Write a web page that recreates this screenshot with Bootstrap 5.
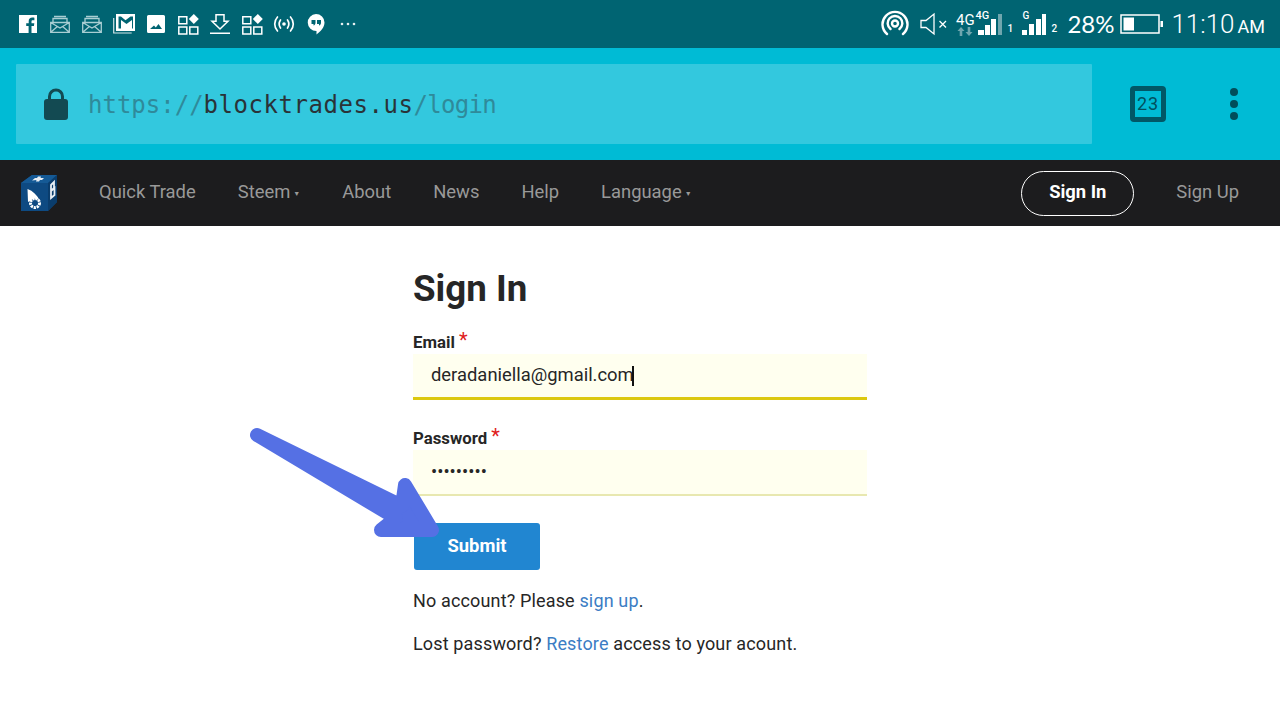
<!DOCTYPE html>
<html lang="en">
<head>
    <meta charset="UTF-8">
    <meta name="viewport" content="width=device-width, initial-scale=1.0">
    <title>Sign In - Blocktrades</title>
    <link href="https://cdn.jsdelivr.net/npm/bootstrap@5.3.3/dist/css/bootstrap.min.css" rel="stylesheet">
    <script src="https://cdn.jsdelivr.net/npm/bootstrap@5.3.3/dist/js/bootstrap.bundle.min.js"></script>
    <style>
        html, body { height: 720px; overflow: hidden; }
        body { font-family: Roboto, sans-serif; background: #fff; color: #262626; position: relative; }

        /* android status bar */
        .status-bar { height: 48px; background: #006472; color: #fff; padding: 0 15px 0 12px; }
        .slot { width: 32px; height: 48px; }
        .slot svg { display: block; }
        .stat-r { height: 48px; }
        .spk { margin-left: 11px; }
        .net-a { width: 20px; margin-left: 5px; }
        .net-a span { font-size: 15px; line-height: 13px; margin-top: 1px; }
        .net-b { width: 30px; height: 24px; }
        .net-c { width: 28px; height: 24px; margin-left: 9px; }
        .net-b span, .net-c span { position: absolute; left: 0; top: -2px; font-size: 11px; line-height: 11px; font-weight: 500; }
        .net-c span { font-size: 10px; }
        .net-b svg, .net-c svg { position: absolute; left: 0; top: 0; }
        .sig-num { width: 6px; font-size: 10px; font-weight: 500; line-height: 10px; align-self: flex-end; margin: 0 0 14px 2px; }
        .sig-two { margin-left: 1px; }
        .batt-pct { font-family: Lato, sans-serif; font-size: 24px; margin-left: 10px; width: 47px; white-space: nowrap; }
        .batt { margin-left: 6px; }
        .clock { font-size: 26px; font-weight: 300; margin-left: 7px; }
        .clock small { font-size: 18px; font-weight: 400; margin-left: 3px; }

        /* browser chrome */
        .url-bar { height: 112px; background: #00bbd5; padding: 16px; }
        .url-box { width: 1076px; height: 80px; background: #33c8de; padding-left: 28px; border-radius: 1px; }
        .url-text { font-family: "DejaVu Sans Mono", monospace; font-size: 24px; margin: 2px 0 0 20px; color: #2f8a9a; }
        .url-text b { font-weight: 400; color: #2a3338; letter-spacing: .55px; }
        .url-text span { letter-spacing: -.7px; }
        .tab-count { width: 36px; height: 36px; border: 5px solid #015766; border-radius: 4px; margin-left: 38px; font-size: 18px; line-height: 1; color: #01505e; letter-spacing: .8px; }
        .menu-dots { margin-left: 64px; gap: 4px; }
        .menu-dots i { display: block; width: 8px; height: 8px; border-radius: 50%; background: #014d5a; }

        /* site nav */
        .site-nav { height: 66px; background: #1c1c1e; padding: 0 20px 0 21px; }
        .site-nav .nav-link, .site-nav .navbar-nav .nav-link { color: #999; font-size: 18.4px; padding: 0 21px 3px; }
        .site-nav .navbar-nav .nav-link.first { margin-left: 21px; }
        .logo-cube { display: block; line-height: 0; }
        .caret-mini { font-size: 7px; margin-left: 3px; vertical-align: 2px; }
        .btn-pill { width: 113px; height: 45px; border: 1.5px solid #fff; border-radius: 23px; color: #fff; font-size: 18.4px; font-weight: 700; padding: 0 0 2px; margin-right: 21px; }
        .btn-pill:hover { color: #fff; }

        /* form */
        .login-wrap { width: 454px; margin: 0 auto; padding-top: 41px; font-size: 18px; letter-spacing: .15px; }
        .login-wrap h1 { font-size: 36.7px; font-weight: 700; line-height: 44px; margin-bottom: 19px; letter-spacing: 0; }
        .fld-label { font-size: 16.8px; font-weight: 700; line-height: 23px; padding-top: 1px; margin: 0; display: block; letter-spacing: 0; }
        .req { color: #e02020; font-weight: 400; font-size: 20px; line-height: 10px; vertical-align: 1px; }
        .fld { height: 46px; border: 0; border-bottom: 2px solid #e8e8b0; border-radius: 0; background: #ffffef; padding: 0 18px 2px; font-size: 18.4px; color: #262626; }
        .fld.active { border-bottom: 3px solid #dcc80f; }
        .fld:focus { background: #ffffef; box-shadow: none; }
        .fld-wrap { margin-bottom: 26px; position: relative; }
        .txt-caret { position: absolute; left: 219px; top: 12px; width: 2px; height: 20px; background: #111; }
        .btn-go { width: 126px; height: 47px; background: #2186d1; color: #fff; font-size: 18.4px; font-weight: 700; border: 0; border-radius: 3px; margin: 1px 0 0 1px; padding: 0 0 2px; }
        .note { margin: 0; line-height: 27px; }
        .note.gap-one { margin: 17px 0 16px; }
        .note a { color: #3b7dc4; text-decoration: none; }
        .arrow-over { position: absolute; left: 0; top: 0; pointer-events: none; }
    </style>
</head>
<body>
    <!-- status bar -->
    <div class="status-bar d-flex align-items-center justify-content-between">
        <div class="d-flex">
            <div class="slot d-flex align-items-center justify-content-center">
                <svg width="18" height="18" viewBox="0 0 18 18"><path fill="#fff" d="M0 0h18v18h-5.500v-7h2.400l.4-2.800h-2.800V6.500c0-.8.3-1.300 1.400-1.300h1.500V2.700c-.3 0-1.100-.1-2.100-.1-2.200 0-3.600 1.300-3.600 3.700v1.900H7.200V11h2.400v7H0z"/></svg>
            </div>
            <div class="slot d-flex align-items-center justify-content-center">
                <svg width="20" height="18" viewBox="0 0 20 18" fill="none" stroke="#a9ced3" stroke-width="1.300"><path d="M.7 7.500h18.600v9.800H.7zM.7 7.500l9.300 5.500 9.300-5.500M.7 17.300l7-6M19.300 17.300l-7-6M3 7V3.500h14V7M4 1.500h12"/></svg>
            </div>
            <div class="slot d-flex align-items-center justify-content-center">
                <svg width="20" height="18" viewBox="0 0 20 18" fill="none" stroke="#a9ced3" stroke-width="1.300"><path d="M.7 7.500h18.600v9.800H.7zM.7 7.500l9.300 5.500 9.300-5.500M.7 17.300l7-6M19.300 17.300l-7-6M3 7V3.500h14V7M4 1.500h12"/></svg>
            </div>
            <div class="slot d-flex align-items-center justify-content-center">
                <svg width="22" height="20" viewBox="0 0 22 20"><path fill="none" stroke="#cfe3e6" stroke-width="1.200" d="M.7 4v15h18"/><path fill="#fff" fill-rule="evenodd" d="M3 0h19v17H3zM5.500 2.500v12h2.500V6l5.500 4 5.500-4v8.500H20V2.500h-2.500l-5 3.800-4.500-3.800z"/></svg>
            </div>
            <div class="slot d-flex align-items-center justify-content-center">
                <svg width="18" height="18" viewBox="0 0 18 18"><path fill="#fff" fill-rule="evenodd" d="M1.500 0h15A1.500 1.500 0 0 1 18 1.500v15a1.500 1.500 0 0 1-1.500 1.500h-15A1.500 1.500 0 0 1 0 16.500v-15A1.500 1.500 0 0 1 1.500 0zM3 14h12l-3.500-5-2.700 3.400-1.800-2z"/></svg>
            </div>
            <div class="slot d-flex align-items-center justify-content-center">
                <svg width="21" height="21" viewBox="0 0 21 21" fill="none" stroke="#fff" stroke-width="1.500"><path d="M.8 2.800h8v7h-8zM.8 13h8v7h-8zM11.800 13h8v7h-8z"/><path fill="#fff" stroke="none" d="M15.800 0l5 5-5 5-5-5z"/></svg>
            </div>
            <div class="slot d-flex align-items-center justify-content-center">
                <svg width="20" height="20" viewBox="0 0 20 20" fill="none" stroke="#fff" stroke-width="1.500"><path d="M6 .8h8v6.400h4l-8 7.800-8-7.800h4zM0 19.200h20"/></svg>
            </div>
            <div class="slot d-flex align-items-center justify-content-center">
                <svg width="21" height="21" viewBox="0 0 21 21" fill="none" stroke="#fff" stroke-width="1.500"><path d="M.8 2.800h8v7h-8zM.8 13h8v7h-8zM11.800 13h8v7h-8z"/><path fill="#fff" stroke="none" d="M15.800 0l5 5-5 5-5-5z"/></svg>
            </div>
            <div class="slot d-flex align-items-center justify-content-center">
                <svg width="22" height="18" viewBox="0 0 22 18" fill="none" stroke="#fff" stroke-width="1.700" stroke-linecap="round"><path d="M4.500 2C.8 6 .8 12 4.500 16M7.500 5C5.800 7.500 5.800 10.500 7.500 13M17.500 2c3.700 4 3.700 10 0 14M14.500 5c1.700 2.500 1.700 5.500 0 8"/><circle cx="11" cy="9" r="1.800" fill="#fff" stroke="none"/></svg>
            </div>
            <div class="slot d-flex align-items-center justify-content-center">
                <svg width="18" height="21" viewBox="0 0 18 21"><path fill="#fff" fill-rule="evenodd" d="M9 0a8.500 8.500 0 0 1 8.500 8.500c0 5-4 9-8 12v-3.500A8.500 8.500 0 0 1 9 0zM4.500 6v4h2v1.500c1.200-.3 2-1.400 2-2.800V6zM10 6v4h2v1.500c1.200-.3 2-1.400 2-2.800V6z"/></svg>
            </div>
            <div class="slot d-flex align-items-center justify-content-center">
                <svg width="16" height="4" viewBox="0 0 16 4" fill="#e6f0f1"><circle cx="2" cy="2" r="1.300"/><circle cx="8" cy="2" r="1.300"/><circle cx="14" cy="2" r="1.300"/></svg>
            </div>
        </div>
        <div class="stat-r d-flex align-items-center">
            <svg width="28" height="28" viewBox="0 0 28 28" fill="none" stroke="#fff" stroke-width="2.400" stroke-linecap="round"><path d="M6 24a12.500 12.500 0 1 1 16 0M9.500 19a7.300 7.300 0 1 1 9 0"/><circle cx="14" cy="13.500" r="3"/></svg>
            <svg class="spk" width="30" height="24" viewBox="0 0 30 24" fill="none" stroke="#fff" stroke-width="1.300"><path d="M1 8.500h5L14 2v20l-8-6.500H1zM19.500 9l6.500 6.500M26 9l-6.500 6.500"/></svg>
            <div class="net-a d-flex flex-column align-items-center">
                <span>4G</span>
                <svg width="16" height="9" viewBox="0 0 16 9" fill="#6fa6ae"><path d="M4 0l3.500 4H5.300v5H2.700V4H.5zM12 9L8.500 5h2.200V0h2.600v5h2.200z"/></svg>
            </div>
            <div class="net-b position-relative">
                <svg width="30" height="24" viewBox="0 0 30 24"><path fill="#fff" d="M3 18h6v5H3zM10 13h5v10h-5zM16 7h5v16h-5z"/><path fill="#6fa6ae" d="M23 2h4v21h-4z"/></svg>
                <span>4G</span>
            </div>
            <span class="sig-num">1</span>
            <div class="net-c position-relative">
                <svg width="28" height="24" viewBox="0 0 28 24" fill="#fff"><path d="M0 18h5v5H0zM7 12h5v11H7zM14 7h5v16h-5zM20 2h4v21h-4z"/></svg>
                <span>G</span>
            </div>
            <span class="sig-num sig-two">2</span>
            <span class="batt-pct">28%</span>
            <svg class="batt" width="44" height="20" viewBox="0 0 44 20"><path fill="none" stroke="#fff" stroke-width="1.500" d="M1 1h38v18H1z"/><path fill="#fff" d="M3.500 3.500H14v13H3.500zM40.500 7H43v6h-2.500z"/></svg>
            <span class="clock">11:10<small>AM</small></span>
        </div>
    </div>

    <!-- browser url bar -->
    <div class="url-bar d-flex align-items-center">
        <div class="url-box d-flex align-items-center">
            <svg width="24" height="32" viewBox="0 0 24 32"><path fill="none" stroke="#134a52" stroke-width="3" d="M5.500 13V8.500a6.500 6.500 0 0 1 13 0V13"/><rect y="11" width="24" height="21" rx="3" fill="#134a52"/></svg>
            <div class="url-text">https://<b>blocktrades.us</b><span>/login</span></div>
        </div>
        <div class="tab-count d-flex align-items-center justify-content-center">23</div>
        <div class="menu-dots d-flex flex-column"><i></i><i></i><i></i></div>
    </div>

    <!-- site nav -->
    <nav class="site-nav navbar navbar-expand justify-content-between">
        <div class="d-flex align-items-center">
            <a href="#" class="logo-cube">
                <svg width="36" height="36" viewBox="0 0 36 36">
                    <path fill="#0e4a82" d="M0 8L11 0h25v27l-9 9H0z"/>
                    <path fill="#155a96" d="M0 8L11 0h25l-9 8z"/>
                    <path fill="#0a3d6d" d="M27 8l9-8v27l-9 9z"/>
                    <!-- top face mark -->
                    <path fill="#e8eef4" d="M11 5.500l3-2.500h2l1-1.500h3l-.5 1.500h3.500L21 5h-2l-1 1.500h-3l.5-1.500z"/>
                    <!-- side face mark -->
                    <path fill="none" stroke="#e8eef4" stroke-width="1.800" d="M30 10l3-3v6l-3 3zM30 16l3.500-3v7l-3.500 3z"/>
                    <!-- sail and wheel -->
                    <path fill="#fff" d="M6.500 14c5.500 2 9.500 6 12 11l-5.500-1.500L7 27z"/>
                    <circle cx="14" cy="28" r="4.500" fill="none" stroke="#fff" stroke-width="3" stroke-dasharray="2.200 .8"/>
                </svg>
            </a>
            <ul class="navbar-nav">
                <li class="nav-item"><a class="nav-link first" href="#">Quick Trade</a></li>
                <li class="nav-item"><a class="nav-link" href="#">Steem<span class="caret-mini">▼</span></a></li>
                <li class="nav-item"><a class="nav-link" href="#">About</a></li>
                <li class="nav-item"><a class="nav-link" href="#">News</a></li>
                <li class="nav-item"><a class="nav-link" href="#">Help</a></li>
                <li class="nav-item"><a class="nav-link" href="#">Language<span class="caret-mini">▼</span></a></li>
            </ul>
        </div>
        <div class="d-flex align-items-center">
            <a href="#" class="btn btn-pill d-flex align-items-center justify-content-center">Sign In</a>
            <a class="nav-link" href="#">Sign Up</a>
        </div>
    </nav>

    <!-- form -->
    <main class="login-wrap">
        <h1>Sign In</h1>
        <form>
            <label class="fld-label" for="email">Email <span class="req">*</span></label>
            <div class="fld-wrap">
                <input id="email" type="text" class="form-control fld active" value="deradaniella@gmail.com">
                <span class="txt-caret"></span>
            </div>
            <label class="fld-label" for="pass">Password <span class="req">*</span></label>
            <div class="fld-wrap">
                <input id="pass" type="password" class="form-control fld" value="secretpwd">
            </div>
            <button type="button" class="btn btn-go">Submit</button>
        </form>
        <p class="note gap-one">No account? Please <a href="#">sign up</a>.</p>
        <p class="note">Lost password? <a href="#">Restore</a> access to your acount.</p>
    </main>

    <!-- annotation arrow -->
    <svg class="arrow-over" width="1280" height="720" viewBox="0 0 1280 720">
        <path fill="#5570e4" stroke="#5570e4" stroke-width="14" stroke-linejoin="round" d="M257 435L402 506 405 485 432 530 381 530 396 518z"/>
    </svg>
</body>
</html>
